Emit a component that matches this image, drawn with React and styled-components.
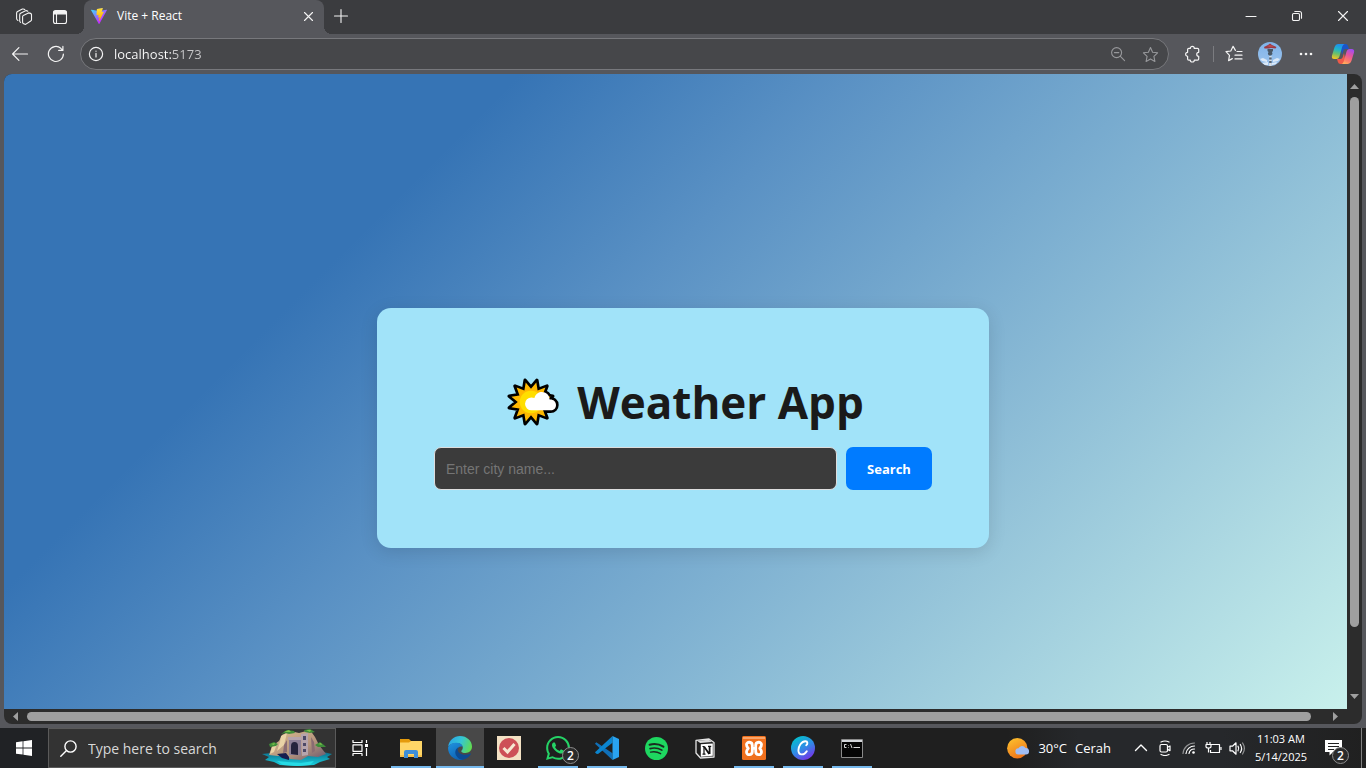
import React from "react";
import styled, { createGlobalStyle } from "styled-components";

const uiFont = `"Segoe UI", "Open Sans", "Noto Sans", sans-serif`;

const GlobalStyle = createGlobalStyle`
  *, *::before, *::after { box-sizing: border-box; }
  body { margin: 0; font-family: ${uiFont}; background: #56575c; }
  button, input { font-family: inherit; }
  button { border: 0; padding: 0; background: none; color: inherit; cursor: pointer; }
`;

const Desktop = styled.div`
  display: flex;
  flex-direction: column;
  height: 100vh;
  background: #56575c;
  color: #fff;
`;

/* ---------- Browser chrome ---------- */

const TitleBar = styled.header`
  display: flex;
  height: 34px;
  flex: none;
  background: #3b3c3f;
`;

const TitleTools = styled.div`
  display: flex;
  align-items: center;
  gap: 4px;
  padding: 0 8px;
`;

const IconButton = styled.button`
  display: inline-flex;
  align-items: center;
  justify-content: center;
  flex: none;
  width: ${(p) => p.$w || 32}px;
  height: 32px;
  color: ${(p) => p.$color || "#f4f4f4"};
`;

const Tab = styled.div`
  position: relative;
  display: flex;
  align-items: center;
  width: 240px;
  padding: 0 0 2px 7px;
  background: #56575c;
  border-radius: 8px 8px 0 0;

  &::before,
  &::after {
    content: "";
    position: absolute;
    bottom: 0;
    width: 8px;
    height: 8px;
  }
  &::before {
    left: -8px;
    background: radial-gradient(circle at 0 0, transparent 8px, #56575c 8px);
  }
  &::after {
    right: -8px;
    background: radial-gradient(circle at 100% 0, transparent 8px, #56575c 8px);
  }
`;

const TabTitle = styled.span`
  flex: 1;
  margin-left: 10px;
  font-size: 12px;
  line-height: 16px;
`;

const WindowControls = styled.div`
  display: flex;
  margin-left: auto;
`;

const Toolbar = styled.nav`
  display: flex;
  align-items: center;
  gap: 4px;
  flex: none;
  height: 40px;
  padding: 0 6px 0 4px;
`;

const AddressBar = styled.div`
  display: flex;
  align-items: center;
  flex: 1;
  height: 32px;
  margin: 0 4px;
  padding-right: 2px;
  background: #46474a;
  border: 1px solid #77787c;
  border-radius: 16px;
`;

const AddressInput = styled.input`
  flex: 1;
  min-width: 0;
  padding: 0 0 0 3px;
  border: 0;
  outline: 0;
  font-size: 13px;
  line-height: 20px;
  color: transparent;
  background: linear-gradient(90deg, #fff 61px, #c9c9cb 61px);
  background-clip: text;
  -webkit-background-clip: text;
`;

const ToolbarDivider = styled.span`
  width: 1px;
  height: 16px;
  background: #7b7c80;
`;

/* ---------- Page viewport ---------- */

const Frame = styled.div`
  display: grid;
  grid-template-columns: minmax(0, 1fr) 15px;
  grid-template-rows: minmax(0, 1fr) 15px;
  flex: 1;
  min-height: 0;
  margin: 0 4px 4px;
  border-radius: 8px;
  overflow: hidden;
  background: #2c2c2c;
`;

const Viewport = styled.div`
  overflow: hidden;
`;

const Page = styled.main`
  display: flex;
  align-items: center;
  justify-content: center;
  width: calc(100% + 15px);
  height: calc(100vh - 60px);
  background: linear-gradient(135deg, #3674b5 25%, #5a91c4 41%, #d1f8ef);
`;

const Card = styled.section`
  width: 612px;
  padding: 56px 57px 58px;
  border-radius: 14px;
  background: #a1e3f9;
  box-shadow: 0 4px 18px rgba(0, 0, 0, 0.12);
`;

const Heading = styled.h1`
  display: flex;
  align-items: center;
  justify-content: center;
  gap: 18px;
  margin: 5px 0 12px;
  padding-left: 4px;
  font-size: 44px;
  line-height: 66px;
  font-weight: 700;
  color: #1a1a1a;
`;

const SearchForm = styled.form`
  display: flex;
  gap: 9px;
`;

const CityInput = styled.input`
  flex: 1;
  min-width: 0;
  height: 43px;
  padding: 0 11px;
  border: 1px solid #ddd;
  border-radius: 7px;
  background: #3b3b3b;
  color: #fff;
  font-family: "Liberation Sans", Arial, sans-serif;
  font-size: 14px;

  &::placeholder { color: #757575; }
`;

const SearchButton = styled.button`
  width: 86px;
  height: 43px;
  border-radius: 7px;
  background: #007bff;
  color: #fff;
  font-size: 13px;
  font-weight: 700;
`;

const ScrollBar = styled.div`
  display: flex;
  flex-direction: ${(p) => (p.$vertical ? "column" : "row")};
  align-items: center;
  justify-content: space-between;
  padding: ${(p) => (p.$vertical ? "9px 0" : "0 9px")};
  gap: 8px;
`;

const ScrollTrack = styled.div`
  display: flex;
  flex-direction: ${(p) => (p.$vertical ? "column" : "row")};
  flex: 1;
`;

const ScrollThumb = styled.div`
  width: ${(p) => (p.$vertical ? "9px" : p.$size)};
  height: ${(p) => (p.$vertical ? p.$size : "9px")};
  border-radius: 5px;
  background: #9f9f9f;
`;

const ArrowIcon = styled.svg`
  flex: none;
  display: block;
  fill: #a0a0a0;
`;

/* ---------- Taskbar ---------- */

const Taskbar = styled.footer`
  display: flex;
  flex: none;
  height: 40px;
  background: #1f1f1f;
`;

const StartButton = styled.button`
  display: flex;
  align-items: center;
  justify-content: center;
  width: 48px;
  background: #202225;
`;

const TaskSearch = styled.label`
  display: flex;
  align-items: center;
  width: 288px;
  padding: 0 3px 0 11px;
  background: #333;
  border: 1px solid #5a5a5a;
`;

const TaskSearchInput = styled.input`
  flex: 1;
  min-width: 0;
  margin-left: 11px;
  padding: 0;
  border: 0;
  outline: 0;
  background: none;
  color: #fff;
  font-size: 14px;

  &::placeholder { color: #d8d8d8; }
`;

const AppList = styled.div`
  display: flex;
  gap: 1px;
`;

const AppButton = styled.button`
  position: relative;
  display: flex;
  align-items: center;
  justify-content: center;
  width: 48px;
  height: 40px;
  margin-right: ${(p) => (p.$gapAfter ? 2 : 0)}px;
  background: ${(p) => (p.$active ? "#484848" : "none")};

  &::after {
    content: "";
    position: absolute;
    bottom: 0;
    left: ${(p) => (p.$active ? 0 : 4)}px;
    right: ${(p) => (p.$active ? 0 : 4)}px;
    height: 2px;
    background: ${(p) => (p.$open ? "#76b9ed" : "none")};
  }
`;

const Badge = styled.span`
  position: absolute;
  right: ${(p) => p.$right}px;
  bottom: 4px;
  width: 17px;
  height: 17px;
  border: 1px solid #8c8c8c;
  border-radius: 50%;
  background: #2b2b2b;
  color: #fff;
  font-size: 12px;
  line-height: 15px;
  font-weight: 600;
  text-align: center;
`;

const Tray = styled.div`
  display: flex;
  align-items: center;
  margin-left: auto;
  background: linear-gradient(90deg, #1f1f1f, #26282b 20%, #26282b 60%, #202020);
`;

const Weather = styled.button`
  display: flex;
  align-items: center;
  gap: 8px;
  margin-right: 18px;
  font-size: 13px;
  line-height: 20px;
`;

const TrayButton = styled.button`
  display: flex;
  align-items: center;
  justify-content: center;
  width: 24px;
  height: 40px;
`;

const Clock = styled.button`
  width: 64px;
  font-size: 11px;
  line-height: 18px;
  text-align: center;
  white-space: nowrap;
`;

const Notifications = styled.button`
  position: relative;
  display: flex;
  align-items: center;
  justify-content: center;
  width: 40px;
  height: 40px;
`;

const ShowDesktop = styled.button`
  align-self: stretch;
  width: 5px;
  margin-left: 8px;
  border-left: 1px solid #808080;
`;

/* ---------- Icons ---------- */

const Line = ({ size = 16, width = 1.1, children, ...rest }) => (
  <svg width={size} height={size} viewBox={`0 0 ${size} ${size}`} fill="none" stroke="currentColor" strokeWidth={width} strokeLinecap="round" strokeLinejoin="round" aria-hidden="true" {...rest}>
    {children}
  </svg>
);

const WorkspacesIcon = () => (
  <Line size={18}>
    <path d="M8.3 7.4 L13.4 4.9 Q16.5 5.2 16.5 6.6 V11.7 Q16.5 12.6 15.7 13 L10.6 16.4 Q7.6 16 7.6 14.6 V8.8 Q7.6 7.7 8.3 7.4 Z" />
    <path d="M5.6 14.4 Q4.7 13.8 4.7 12.8 V7 Q4.7 5.8 5.6 5.3 L10.5 2.8 Q11.6 2.4 12.8 3.2" />
    <path d="M2.9 12.4 Q1.6 11.8 1.6 10.6 V5.2 Q1.6 4 2.6 3.5 L7.4 1.1 Q8.6 .7 9.8 1.5" />
  </Line>
);

const TabActionsIcon = () => (
  <Line>
    <rect x="1.5" y="1.5" width="13" height="13" rx="2" />
    <path d="M2 2.5h12v2.4H2z" fill="currentColor" />
    <path d="M4.5 5v9" />
  </Line>
);

const ViteIcon = () => (
  <svg width="16" height="16" viewBox="0 0 256 257" aria-hidden="true">
    <defs>
      <linearGradient id="viteA" x1="-.8%" x2="57.6%" y1="7.7%" y2="78.4%">
        <stop offset="0%" stopColor="#41D1FF" />
        <stop offset="100%" stopColor="#BD34FE" />
      </linearGradient>
      <linearGradient id="viteB" x1="43.4%" x2="50.3%" y1="2.2%" y2="89%">
        <stop offset="0%" stopColor="#FFEA83" />
        <stop offset="8.3%" stopColor="#FFDD35" />
        <stop offset="100%" stopColor="#FFA800" />
      </linearGradient>
    </defs>
    <path fill="url(#viteA)" d="M255.153 37.938L134.897 252.976c-2.483 4.44-8.862 4.466-11.382.048L.875 37.958c-2.746-4.814 1.371-10.646 6.827-9.67l120.385 21.517a6.537 6.537 0 0 0 2.322-.004l117.867-21.483c5.438-.991 9.574 4.796 6.877 9.62Z" />
    <path fill="url(#viteB)" d="M185.432.063L96.44 17.501a3.268 3.268 0 0 0-2.634 3.014l-5.474 92.456a3.268 3.268 0 0 0 3.997 3.378l24.777-5.718c2.318-.535 4.413 1.507 3.936 3.838l-7.361 36.047c-.495 2.426 1.782 4.5 4.151 3.78l15.304-4.649c2.372-.72 4.652 1.36 4.15 3.788l-11.698 56.621c-.732 3.542 3.979 5.473 5.943 2.437l1.313-2.028l72.516-144.72c1.215-2.423-.88-5.186-3.54-4.672l-25.505 4.922c-2.396.462-4.435-1.77-3.759-4.114l16.646-57.705c.677-2.35-1.37-4.583-3.769-4.113Z" />
  </svg>
);

const CloseIcon = ({ size }) => (
  <Line size={size}>
    <path d={`M1.5 1.5 L${size - 1.5} ${size - 1.5} M${size - 1.5} 1.5 L1.5 ${size - 1.5}`} />
  </Line>
);

const PlusIcon = () => <Line><path d="M8 1.5v13M1.5 8h13" /></Line>;
const MinimizeIcon = () => <Line size={12}><path d="M1 6.5h10" /></Line>;
const RestoreIcon = () => (
  <Line size={12}>
    <rect x="1.5" y="3.5" width="7" height="7" rx="1.2" />
    <path d="M3.8 1.5h4.7q2 0 2 2v4.7" />
  </Line>
);
const BackIcon = () => <Line size={18} width={1.2}><path d="M16.500 9H1.8M7.900 2.700L1.600 9l6.300 6.300" /></Line>;
const ReloadIcon = () => (
  <Line size={18} width={1.2}>
    <path d="M16.4 9a7.5 7.5 0 1 1-2.6-5.7l1.8 1.8M15.9 1.4v4h-4.2" />
  </Line>
);
const InfoIcon = () => (
  <Line size={16} width={1.2}>
    <circle cx="8" cy="8" r="6.6" />
    <path d="M8 7.4v3.6M8 5v.2" />
  </Line>
);
const ZoomOutIcon = () => (
  <Line><circle cx="6.6" cy="6.6" r="5" /><path d="M10.4 10.4l4.2 4.2M4.4 6.6h4.4" /></Line>
);
const starPath = "M8.5 1.5l2.1 4.7 5 .6-3.7 3.5 1 5.1-4.4-2.5-4.4 2.5 1-5.1L1.4 6.8l5-.6z";
const StarIcon = () => <Line size={17}><path d={starPath} /></Line>;
const ExtensionIcon = () => (
  <Line size={18} width={1.2}>
    <path d="M6.300 3.400c0-2.600 4-2.600 4 0h3.200q1.200 0 1.200 1.200v2.700c-2.600 0-2.600 4 0 4v2.700q0 1.200-1.200 1.200h-3.200c0 2.400-4 2.400-4 0H4.800q-1.200 0-1.200-1.200v-2.700c-2.600 0-2.600-4 0-4V4.600q0-1.200 1.200-1.200z" />
  </Line>
);
const FavoritesIcon = () => (
  <Line size={18} width={1.2}>
    <path d="M10.4 5.4L8.1 1.3 5.8 6 1 6.7l3.5 3.6-.9 5.3 3.7-2" />
    <path d="M12 6.5h5M10 10.2h7M10 13.9h7" />
  </Line>
);
const DotsIcon = () => (
  <svg width="14" height="4" viewBox="0 0 14 4" fill="currentColor" aria-hidden="true">
    <circle cx="2" cy="2" r="1.3" /><circle cx="7" cy="2" r="1.3" /><circle cx="12" cy="2" r="1.3" />
  </svg>
);

const Avatar = () => (
  <svg width="24" height="24" viewBox="0 0 24 24" aria-hidden="true">
    <defs>
      <clipPath id="avatarClip"><circle cx="12" cy="12" r="12" /></clipPath>
      <linearGradient id="sky" x1="0" y1="0" x2="0" y2="1">
        <stop offset="0" stopColor="#7fb2e8" /><stop offset="1" stopColor="#9cc4ee" />
      </linearGradient>
    </defs>
    <g clipPath="url(#avatarClip)">
      <path fill="url(#sky)" d="M0 0h24v24H0z" />
      <path fill="#dce9f7" d="M2 17l3-1 4 2v2l-5-1zM15 18l4-2 3 1-2 2-5 1zM4 21l6-1v3H6zM14 21l5-1-1 2-4 1z" />
      <path fill="#9c3a44" d="M6 5l4-2 2-1.500L14 3l4.500 2-1 1.500L13 6l-2 .5-4.500 0z" />
      <path fill="#b84a50" d="M9 4l3-1 4 1.500-4 .7z" />
      <path fill="#4a5866" d="M9.500 7h5.500v2l-1 1 .5 2-1.500 1.500h-2L9.800 12l.7-2-1-1z" />
      <path fill="#d9dde2" d="M11.200 14h2.400v1.500h-2.400zM11.200 17.500h2.400V19h-2.400zM11.200 21h2.400v3h-2.400z" />
      <path fill="#5b6672" d="M11.200 15.500h2.400v2h-2.400zM11.200 19h2.400v2h-2.400z" />
    </g>
  </svg>
);

const CopilotIcon = () => (
  <svg width="24" height="22" viewBox="0 0 24 22" aria-hidden="true">
    <defs>
      <linearGradient id="copA" x1=".5" y1="0" x2=".3" y2="1">
        <stop offset="0" stopColor="#1e8df0" /><stop offset=".35" stopColor="#1fb5c9" />
        <stop offset=".65" stopColor="#6cc06a" /><stop offset="1" stopColor="#f4c620" />
      </linearGradient>
      <linearGradient id="copB" x1=".7" y1="0" x2=".3" y2="1">
        <stop offset="0" stopColor="#a24cf0" /><stop offset=".4" stopColor="#e5559c" />
        <stop offset=".75" stopColor="#fb7a6a" /><stop offset="1" stopColor="#ffae5a" />
      </linearGradient>
    </defs>
    <path fill="#1b55c8" d="M9 1h5.5q2 0 2.6 2l.9 3h-3.5q-1.7 0-2.2 1.7L11 12z" />
    <path fill="#ee5a4a" d="M15 21H9.5q-2 0-2.6-2L6 16h3.5q1.7 0 2.2-1.7L13 10z" />
    <path fill="url(#copA)" d="M7 1h6.5q-1.6.6-2.2 2.6L8.6 13q-.8 3-3.2 3H3.3Q.2 16 1 12.5L3.6 4Q4.6 1 7 1z" />
    <path fill="url(#copB)" d="M17 21h-6.500q1.600-.6 2.200-2.600L15.400 9q.8-3 3.200-3h2.100q3.100 0 2.300 3.500L20.400 18q-1 3-3.400 3z" />
  </svg>
);

const sunPoints = Array.from({ length: 24 }, (_, i) => {
  const angle = ((15 + i * 15) * Math.PI) / 180;
  const radius = i % 2 ? 15 : 23;
  return `${(25 + radius * Math.sin(angle)).toFixed(1)},${(25 - radius * Math.cos(angle)).toFixed(1)}`;
}).join(" ");

const cloudPath = "M25.500 33.500a6.600 6.600 0 0 1 0-13.200q1.500 0 3 .6c1.200-4 4.500-6 7.500-6 4.500 0 7.500 3 8 7.500 3.500-.3 6.500 2 6.500 5.600 0 3.300-2.300 5.500-5.500 5.500z";

const SunCloudIcon = () => (
  <svg width="53" height="50" viewBox="0 0 53 50" role="img" aria-label="Sun behind small cloud">
    <g stroke="#000" strokeWidth="5.500" strokeLinejoin="round" fill="#000" transform="translate(.5 .5) scale(.98)">
      <polygon points={sunPoints} strokeWidth="3.500" />
      <path d={cloudPath} />
    </g>
    <g transform="translate(.5 .5) scale(.98)">
      <polygon points={sunPoints} fill="#ffb900" transform="translate(2.500 2.500) scale(.9)" />
      <circle cx="25" cy="25" r="11.500" fill="#ffde00" />
      <path d={cloudPath} fill="#fff" />
    </g>
  </svg>
);

const WindowsIcon = () => (
  <svg width="16" height="16" viewBox="0 0 16 16" fill="#fff" aria-hidden="true">
    <path d="M0 2.200l6.600-.9v6.200H0zM7.400 1.200L16 0v7.500H7.400zM0 8.400h6.600v6.200L0 13.700zM7.400 8.400H16V16l-8.600-1.200z" />
  </svg>
);

const SearchIcon = () => (
  <Line size={17} width={1.400}><circle cx="10.500" cy="6.500" r="5.600" /><path d="M6.500 10.500L.8 16.200" /></Line>
);

const IslandArt = () => (
  <svg width="70" height="38" viewBox="0 0 70 38" aria-hidden="true">
    <defs>
      <linearGradient id="rock" x1="0" y1="0" x2="1" y2="1">
        <stop offset="0" stopColor="#ddbf92" /><stop offset=".6" stopColor="#b3937c" /><stop offset="1" stopColor="#66546e" />
      </linearGradient>
      <linearGradient id="sea" x1="0" y1="0" x2="0" y2="1">
        <stop offset="0" stopColor="#0c6d8b" /><stop offset="1" stopColor="#19d5e3" />
      </linearGradient>
    </defs>
    <path fill="url(#sea)" d="M0 25l9-1 52-1 9 2-5 3 3 2-10 3-6 3-16 1-18-1-6-3-9-2 4-3z" />
    <path fill="#27dbe5" d="M15 32l10 1 14 1 13-2-4 4-13 1-14-1z" />
    <path fill="url(#rock)" d="M7 26l3-9 7-5 3-6 8-4 9 2 11-3 5 7 4 8 7 9-8 3-10-1-7 4-11-1-3-4-9 1z" />
    <path fill="#e9d3a6" d="M19 7l6-3-3 12-7 6 3-9zM10 18l5-3-3 8-4 2z" />
    <path fill="#8a6c72" d="M49 8l3 5 1 9-3 2zM22 16l3-5v12l-4 1z" />
    <path fill="#171d4f" d="M15 25l9-1 3 4 0 3-7-2z" />
    <path fill="#8c7f96" d="M27 10h12v16H27z" />
    <path fill="#b5a4ac" d="M26 8h13v3H26zM39 5l7-1v22l-6 1z" />
    <path fill="#25243d" d="M29 25V17q0-4 3.500-4t3.500 4v9z" />
    <path fill="#4c4966" d="M41 7h3v4h-3zM41 14h3v3h-3zM41 20h3v3h-3z" />
    <path fill="#3f8d3a" d="M19 5l6-4 7 1 1 2-6 1-4-1zM42 1l6-1 5 3-5 1-5-1zM7 15l5-2 4 2-2 2-6 1zM53 16l5-3 4 3 2 2-8 0z" />
    <path fill="#7fc24b" d="M22 3l5-2 2 2zM44 1h5l-1 2zM9 15l4-1-1 2zM56 15l3-1 1 2z" />
  </svg>
);

const TaskViewIcon = () => (
  <Line size={18} width={1.200} strokeLinecap="butt">
    <path d="M2 1v2.500h9V1M2 17v-2.500h9V17" />
    <rect x="2" y="5.800" width="9" height="6.500" />
    <path d="M15.500 1v3M15.500 9v8" />
    <path d="M14 5h3v3h-3z" fill="currentColor" stroke="none" />
  </Line>
);

const FolderIcon = () => (
  <svg width="22" height="19" viewBox="0 0 22 19" aria-hidden="true">
    <path fill="#e59b0c" d="M0 0h9l2 2v3H0z" />
    <path fill="#ffd667" d="M0 3.500h9L11 2h11v16H0z" />
    <path fill="#f6c04b" d="M0 16h22v2H0z" />
    <path fill="#3f8fd8" d="M4 19v-6q0-2 2-2h10q2 0 2 2v6h-4v-4H8v4z" />
  </svg>
);

const EdgeIcon = () => (
  <svg width="24" height="24" viewBox="0 0 24 24" aria-hidden="true">
    <defs>
      <linearGradient id="edgeTop" x1="0" y1=".3" x2="1" y2=".6">
        <stop offset="0" stopColor="#2aa5e6" /><stop offset=".5" stopColor="#35c6d4" /><stop offset="1" stopColor="#62dc4e" />
      </linearGradient>
      <linearGradient id="edgeLow" x1="0" y1="0" x2=".5" y2="1">
        <stop offset="0" stopColor="#1f93e0" /><stop offset="1" stopColor="#0f63b4" />
      </linearGradient>
    </defs>
    <path fill="url(#edgeTop)" d="M.2 10.500C1 4.500 6 0 12 0c7 0 12 5 12 10.600 0 3.900-3 6.400-6.500 6.400-2.500 0-4.200-.8-4.200-1.800 0-.8 1.500-1.200 1.500-3.400C14.800 9 12 7 8.600 7 4.600 7 1.500 8.800.2 10.500z" />
    <path fill="url(#edgeLow)" d="M.1 11.500C1.500 8 5 6.800 8.600 6.800c3.200 0 5.400 1.600 6.100 4-3-1-5.700.9-5.700 4.200 0 4.500 3.500 8.300 6.500 8.500Q13.800 24 12 24C5 24-.4 18 .1 11.500z" />
    <path fill="#0c4a92" d="M10.500 11.200C7 13 6.500 17 8.500 20c1.600 2.600 4 4 6.500 3.700 3.300-.6 6-2.600 7.800-5.400.3-.5-.2-.9-.7-.6-5.300 2.600-11.900.2-12.400-3.800-.1-1 .1-1.900.8-2.700z" />
  </svg>
);

const TodoIcon = () => (
  <svg width="24" height="24" viewBox="0 0 24 24" aria-hidden="true">
    <path fill="#f3e1c4" d="M0 0h24v24H0z" />
    <circle cx="12" cy="12" r="10" fill="#cd5057" />
    <path d="M6.500 12l4 4 7-8" fill="none" stroke="#f6e8d2" strokeWidth="3" />
  </svg>
);

const WhatsAppIcon = () => (
  <svg width="24" height="24" viewBox="0 0 24 24" aria-hidden="true">
    <path fill="#25d366" d="M17.472 14.382c-.297-.149-1.758-.867-2.030-.967-.273-.099-.471-.148-.670.150-.197.297-.767.966-.940 1.164-.173.199-.347.223-.644.075-.297-.150-1.255-.463-2.390-1.475-.883-.788-1.480-1.761-1.653-2.059-.173-.297-.018-.458.130-.606.134-.133.298-.347.446-.520.149-.174.198-.298.298-.497.099-.198.050-.371-.025-.520-.075-.149-.669-1.612-.916-2.207-.242-.579-.487-.500-.669-.510-.173-.008-.371-.010-.570-.010-.198 0-.520.074-.792.372-.272.297-1.040 1.016-1.040 2.479 0 1.462 1.065 2.875 1.213 3.074.149.198 2.096 3.200 5.077 4.487.709.306 1.262.489 1.694.625.712.227 1.360.195 1.871.118.571-.085 1.758-.719 2.006-1.413.248-.694.248-1.289.173-1.413-.074-.124-.272-.198-.570-.347zM12.050 21.785h-.004a9.870 9.870 0 0 1-5.031-1.378l-.361-.214-3.741.982.998-3.648-.235-.374a9.860 9.860 0 0 1-1.510-5.260c.001-5.450 4.436-9.884 9.888-9.884 2.640 0 5.122 1.030 6.988 2.898a9.825 9.825 0 0 1 2.893 6.994c-.003 5.450-4.437 9.884-9.885 9.884zM20.463 3.488A11.815 11.815 0 0 0 12.050 0C5.495 0 .160 5.335.157 11.892c0 2.096.547 4.142 1.588 5.945L.057 24l6.305-1.654a11.882 11.882 0 0 0 5.683 1.448h.005c6.554 0 11.890-5.335 11.893-11.893a11.821 11.821 0 0 0-3.480-8.413z" />
  </svg>
);

const CodeIcon = () => (
  <svg width="24" height="24" viewBox="0 0 24 24" aria-hidden="true">
    <path fill="#1070b8" d="M1.300 6.200L0 7.700 17.500 24v-6.800z" />
    <path fill="#0b85cf" d="M1.300 17.800L0 16.300 17.500 0v6.800L3 18z" />
    <path fill="#29a3f0" d="M17.500 0L24 3v18l-6.500 3z" />
  </svg>
);

const SpotifyIcon = () => (
  <svg width="23" height="23" viewBox="0 0 24 24" aria-hidden="true">
    <circle cx="12" cy="12" r="12" fill="#1ed760" />
    <g fill="none" stroke="#1b2b20" strokeLinecap="round">
      <path d="M4.800 8q7.800-2 14.400 2" strokeWidth="2.200" />
      <path d="M5.300 12.100q6.500-1.800 12.300 1.600" strokeWidth="1.800" />
      <path d="M5.800 15.800q5.500-1.400 10.500 1.600" strokeWidth="1.500" />
    </g>
  </svg>
);

const NotionIcon = () => (
  <svg width="20" height="21" viewBox="0 0 20 21" aria-hidden="true">
    <path d="M1 2.300L14 1l5 3.500V19L5.500 20 1 15z" fill="#1f1f1f" stroke="#e4e4e4" strokeWidth="1.300" strokeLinejoin="round" />
    <path d="M2 2.700L14 1.800l3 2.300-11.800.9z" fill="#d8d8d8" />
    <path d="M5.800 6.300l12-.8v12.300l-12 .9z" fill="#fff" />
    <path d="M9 8.500v7.700M7.500 16.200h3M13 8.300h3.200M7.500 8.500h2" fill="none" stroke="#111" strokeWidth="1.200" />
    <path d="M9.200 8.700l5 7.300M14.600 8.300V16" fill="none" stroke="#111" strokeWidth="1.800" />
  </svg>
);

const XamppIcon = () => (
  <svg width="24" height="24" viewBox="0 0 24 24" aria-hidden="true">
    <rect width="24" height="24" rx="1.500" fill="#f0701d" />
    <path fill="#f8a56b" d="M1 1h22v2H1z" />
    <g fill="none" stroke="#fff" strokeWidth="2.800" strokeLinejoin="round" strokeLinecap="round">
      <path d="M10.600 12.300H13.400" />
      <path d="M10.300 9.500C10.300 5.300 4.500 5.300 4.500 8.600c0 2 .9 2.500 1.800 3.700-.9 1.200-1.800 1.900-1.800 3.800 0 3.500 5.800 3.500 5.800-.7V12.300z" />
      <path d="M13.700 9.500c0-4.200 5.800-4.200 5.800-.9 0 2-.9 2.500-1.800 3.700.9 1.200 1.800 1.900 1.800 3.800 0 3.500-5.800 3.500-5.800-.7V12.300z" />
    </g>
  </svg>
);

const CanvaIcon = () => (
  <svg width="24" height="24" viewBox="0 0 24 24" aria-hidden="true">
    <defs>
      <linearGradient id="canva" x1=".2" y1="0" x2=".8" y2="1">
        <stop offset="0" stopColor="#00c4cc" /><stop offset=".5" stopColor="#2f8be6" /><stop offset="1" stopColor="#7d2ae8" />
      </linearGradient>
    </defs>
    <circle cx="12" cy="12" r="12" fill="url(#canva)" />
    <path d="M15.200 9.200c1.600-1 1.800-4-.8-4-4 0-7 5.200-7 9 0 5.200 5.500 5.600 8.400 1" fill="none" stroke="#fff" strokeWidth="1.900" strokeLinecap="round" />
  </svg>
);

const TerminalIcon = () => (
  <svg width="22" height="19" viewBox="0 0 22 19" aria-hidden="true">
    <path fill="#050505" stroke="#8a8a8a" d="M.5.500h21v18H.5z" />
    <path fill="#d3d6da" d="M1 1h20v2H1z" />
    <path d="M5.500 5.500H3.500v3h2M7.500 6v.5M7.500 8V8.500M9.500 5l1.500 4M12.500 8.500H19" fill="none" stroke="#d6d6d6" />
  </svg>
);

const WeatherIcon = () => (
  <svg width="23" height="21" viewBox="0 0 23 21" aria-hidden="true">
    <defs>
      <linearGradient id="sunTray" x1=".2" y1="0" x2=".7" y2="1">
        <stop offset="0" stopColor="#fcbf2d" /><stop offset="1" stopColor="#ee7019" />
      </linearGradient>
    </defs>
    <circle cx="10.300" cy="10.300" r="10.200" fill="url(#sunTray)" />
    <path d="M11.500 16.500a3 3 0 0 1 0-6.200 4 4 0 0 1 7-.4 3.300 3.300 0 0 1 .5 6.600z" fill="#9fbdf5" />
  </svg>
);

const ChevronUpIcon = () => <Line size={14} width={1.400}><path d="M1.500 9.500L7 4l5.500 5.500" /></Line>;
const MeetNowIcon = () => (
  <Line size={16} width={1.200}>
    <rect x="3" y="4.500" width="7.500" height="7.500" rx="1.500" />
    <path d="M10.500 7.200L13 6v4.600l-2.500-1.200M4 2q4-2 8 0M4 14.500q4 2 8 0" />
  </Line>
);
const WifiIcon = () => (
  <Line size={14} width={1.200}>
    <path d="M1 12.500A11.500 11.500 0 0 1 12.500 2" opacity=".5" />
    <path d="M4 12.500A8.500 8.500 0 0 1 12.500 5M7 12.500A5.500 5.500 0 0 1 12.500 8" />
    <circle cx="11.500" cy="11.500" r="1.300" fill="currentColor" stroke="none" />
  </Line>
);
const BatteryIcon = () => (
  <Line size={17} width={1.200} strokeLinecap="butt">
    <path d="M6 4.500h8.500v8H5.500V10M16 7v3M2 2v2.500M5 2v2.500M1 4.500h5v2q0 1.500-2.500 1.500T1 6.500zM3.500 8v4.500" />
  </Line>
);
const VolumeIcon = () => (
  <Line size={17} width={1.200}>
    <path d="M1 6.200h2.500L7 2.800v11.400L3.500 10.800H1z" />
    <path d="M9 6.200q1.500 2.300 0 4.600M11.300 4.500q2.600 4 0 8" />
    <path d="M13.600 3q3.600 5.500 0 11" opacity=".5" />
  </Line>
);
const MessageIcon = () => (
  <svg width="17" height="16" viewBox="0 0 17 16" aria-hidden="true">
    <path fill="#fff" d="M0 0h17v12H8l-3.500 3.500V12H0z" />
    <path stroke="#222" d="M3 3.500h11M3 6.500h11M3 9.500h6" />
  </svg>
);

/* ---------- Data ---------- */

const apps = [
  { name: "File Explorer", Icon: FolderIcon, open: true },
  { name: "Microsoft Edge", Icon: EdgeIcon, open: true, active: true },
  { name: "To-do", Icon: TodoIcon },
  { name: "WhatsApp", Icon: WhatsAppIcon, open: true, badge: 2 },
  { name: "Visual Studio Code", Icon: CodeIcon, open: true },
  { name: "Spotify", Icon: SpotifyIcon },
  { name: "Notion", Icon: NotionIcon },
  { name: "XAMPP", Icon: XamppIcon, open: true },
  { name: "Canva", Icon: CanvaIcon, open: true },
  { name: "Command Prompt", Icon: TerminalIcon, open: true },
];

const trayItems = [
  { name: "Show hidden icons", Icon: ChevronUpIcon },
  { name: "Meet now", Icon: MeetNowIcon },
  { name: "Network", Icon: WifiIcon },
  { name: "Battery", Icon: BatteryIcon },
  { name: "Volume", Icon: VolumeIcon },
];

function BrowserChrome() {
  return (
    <>
      <TitleBar>
        <TitleTools>
          <IconButton aria-label="Workspaces"><WorkspacesIcon /></IconButton>
          <IconButton aria-label="Tab actions"><TabActionsIcon /></IconButton>
        </TitleTools>
        <Tab>
          <ViteIcon />
          <TabTitle>Vite + React</TabTitle>
          <IconButton aria-label="Close tab"><CloseIcon size={11} /></IconButton>
        </Tab>
        <IconButton $w={34} aria-label="New tab"><PlusIcon /></IconButton>
        <WindowControls>
          <IconButton $w={46} aria-label="Minimize"><MinimizeIcon /></IconButton>
          <IconButton $w={46} aria-label="Restore"><RestoreIcon /></IconButton>
          <IconButton $w={46} aria-label="Close"><CloseIcon size={12} /></IconButton>
        </WindowControls>
      </TitleBar>
      <Toolbar>
        <IconButton aria-label="Back"><BackIcon /></IconButton>
        <IconButton aria-label="Reload"><ReloadIcon /></IconButton>
        <AddressBar>
          <IconButton $w={30} aria-label="Site information"><InfoIcon /></IconButton>
          <AddressInput aria-label="Address" defaultValue="localhost:5173" />
          <IconButton $color="#97989b" aria-label="Zoom out"><ZoomOutIcon /></IconButton>
          <IconButton $color="#97989b" aria-label="Add to favorites"><StarIcon /></IconButton>
        </AddressBar>
        <IconButton aria-label="Extensions"><ExtensionIcon /></IconButton>
        <ToolbarDivider />
        <IconButton aria-label="Favorites"><FavoritesIcon /></IconButton>
        <IconButton aria-label="Profile"><Avatar /></IconButton>
        <IconButton aria-label="Settings and more"><DotsIcon /></IconButton>
        <IconButton $w={34} aria-label="Copilot"><CopilotIcon /></IconButton>
      </Toolbar>
    </>
  );
}

function WeatherPage() {
  return (
    <Page>
      <Card>
        <Heading><SunCloudIcon />Weather App</Heading>
        <SearchForm onSubmit={(e) => e.preventDefault()}>
          <CityInput aria-label="City name" placeholder="Enter city name..." />
          <SearchButton type="submit">Search</SearchButton>
        </SearchForm>
      </Card>
    </Page>
  );
}

export default function App() {
  return (
    <Desktop>
      <GlobalStyle />
      <BrowserChrome />
      <Frame>
        <Viewport><WeatherPage /></Viewport>
        <ScrollBar $vertical>
          <ArrowIcon width="9" height="6" viewBox="0 0 9 6"><path d="M0 6L4.500 1 9 6z" /></ArrowIcon>
          <ScrollTrack $vertical><ScrollThumb $vertical $size="90%" /></ScrollTrack>
          <ArrowIcon width="9" height="6" viewBox="0 0 9 6"><path d="M0 0h9L4.500 5z" /></ArrowIcon>
        </ScrollBar>
        <ScrollBar>
          <ArrowIcon width="6" height="9" viewBox="0 0 6 9"><path d="M5 0v9L0 4.500z" /></ArrowIcon>
          <ScrollTrack><ScrollThumb $size="99%" /></ScrollTrack>
          <ArrowIcon width="6" height="9" viewBox="0 0 6 9"><path d="M1 0v9l5-4.500z" /></ArrowIcon>
        </ScrollBar>
      </Frame>
      <Taskbar>
        <StartButton aria-label="Start"><WindowsIcon /></StartButton>
        <TaskSearch>
          <SearchIcon />
          <TaskSearchInput aria-label="Search" placeholder="Type here to search" />
          <IslandArt />
        </TaskSearch>
        <AppList>
          <AppButton $gapAfter aria-label="Task view"><TaskViewIcon /></AppButton>
          {apps.map(({ name, Icon, open, active, badge }) => (
            <AppButton key={name} aria-label={name} $open={open} $active={active}>
              <Icon />
              {badge && <Badge $right={3}>{badge}</Badge>}
            </AppButton>
          ))}
        </AppList>
        <Tray>
          <Weather><WeatherIcon /><span>30°C</span><span>Cerah</span></Weather>
          {trayItems.map(({ name, Icon }) => (
            <TrayButton key={name} aria-label={name}><Icon /></TrayButton>
          ))}
          <Clock>11:03 AM<br />5/14/2025</Clock>
          <Notifications aria-label="Notifications"><MessageIcon /><Badge $right={4}>2</Badge></Notifications>
          <ShowDesktop aria-label="Show desktop" />
        </Tray>
      </Taskbar>
    </Desktop>
  );
}
